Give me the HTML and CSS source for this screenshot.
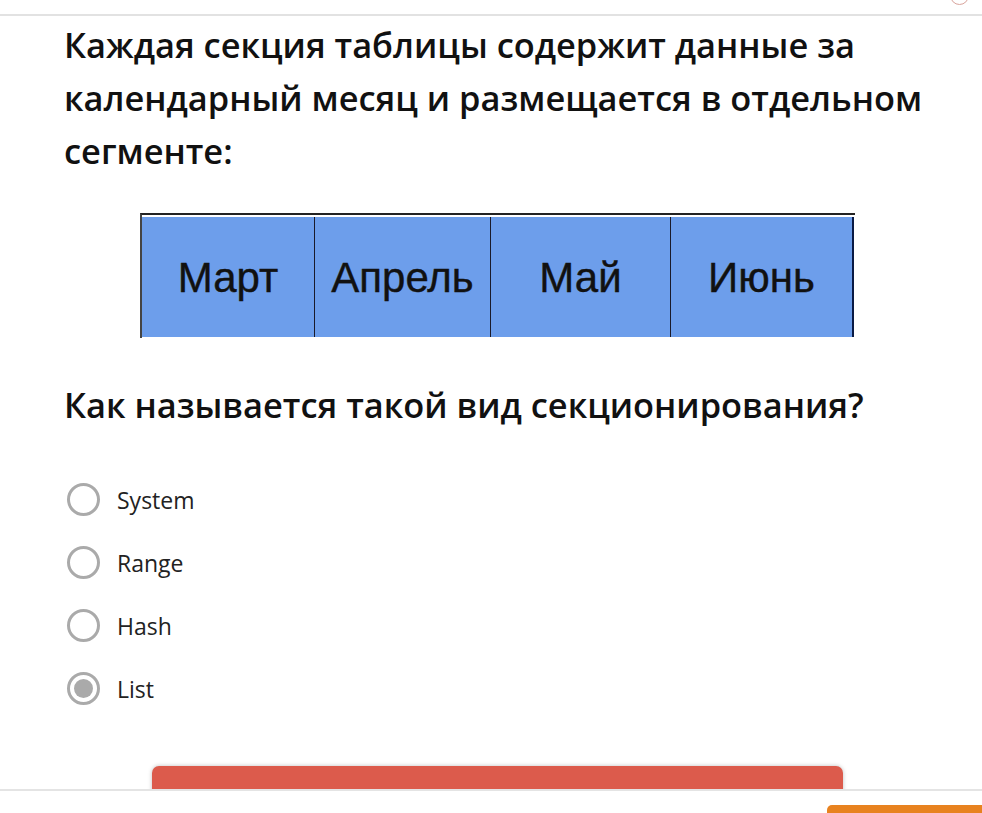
FILE: index.html
```html
<!DOCTYPE html>
<html lang="ru">
<head>
<meta charset="utf-8">
<title>Вопрос</title>
<link rel="stylesheet" href="styles.css">
</head>
<body>
<header class="topbar">
  <span class="topbar-icon"></span>
</header>
<main class="content">
  <h2 class="lead">Каждая секция таблицы содержит данные за календарный месяц и размещается в отдельном сегменте:</h2>
  <div class="figure">
    <div class="months">
      <div class="cell c1">Март</div>
      <div class="cell c2">Апрель</div>
      <div class="cell c3">Май</div>
      <div class="cell c4">Июнь</div>
    </div>
  </div>
  <h2 class="question">Как называется такой вид секционирования?</h2>
  <ul class="options">
    <li class="option"><span class="radio"></span><span class="label">System</span></li>
    <li class="option"><span class="radio"></span><span class="label">Range</span></li>
    <li class="option"><span class="radio"></span><span class="label">Hash</span></li>
    <li class="option"><span class="radio checked"></span><span class="label">List</span></li>
  </ul>
  <div class="submit-wrap"><div class="submit"></div></div>
</main>
<footer class="footer">
  <div class="next"></div>
</footer>
</body>
</html>
```
FILE: styles.css
```css
* { box-sizing: border-box; }
html, body { margin: 0; padding: 0; background: #fff; }
body {
  font-family: "Open Sans", "Noto Sans", sans-serif;
  color: #111;
  width: 982px;
  height: 813px;
  overflow: hidden;
}
.topbar {
  height: 16px;
  border-bottom: 2px solid #e2e2e2;
  position: relative;
}
.topbar-icon {
  position: absolute;
  right: 13px;
  top: -14px;
  width: 19px;
  height: 19px;
  border: 1.5px solid #d9a49c;
  border-radius: 50%;
}
.content {
  padding: 2px 0 0 64px;
}
.lead, .question {
  margin: 0;
  font-size: 34.4px;
  font-weight: 600;
  line-height: 53px;
  color: #111;
}
.lead { width: 900px; }
.figure {
  margin: 36px 0 0 76px;
  width: 715px;
  height: 125px;
}
.months {
  display: flex;
  height: 125px;
  border-top: 2px solid #222;
  border-left: 2px solid #444;
  padding-top: 2px;
  background: #fff;
}
.cell {
  background: #6d9eeb;
  height: 120px;
  display: flex;
  align-items: center;
  justify-content: center;
  font-family: "Liberation Sans", Arial, sans-serif;
  font-size: 42px;
  color: #111;
  border-right: 1.5px solid #1a1a2a;
  padding-top: 2px;
  -webkit-text-stroke: 0.4px #111;
}
.c1 { width: 173px; }
.c2 { width: 176px; }
.c3 { width: 180px; }
.c4 { width: 183px; border-right: 2px solid #0a1a44; }
.question { margin-top: 40px; }
.options {
  list-style: none;
  margin: 37px 0 0 3px;
  padding: 0;
}
.option {
  display: flex;
  align-items: center;
  height: 63px;
}
.radio {
  width: 33px;
  height: 33px;
  border: 3px solid #aaa;
  border-radius: 50%;
  display: flex;
  align-items: center;
  justify-content: center;
  flex: none;
}
.radio.checked::after {
  content: "";
  width: 19px;
  height: 19px;
  border-radius: 50%;
  background: #aaa;
}
.label {
  margin-left: 17px;
  font-size: 23px;
  color: #222;
}
.submit-wrap {
  margin: 46px 0 0 88px;
}
.submit {
  width: 691px;
  height: 40px;
  background: #dc5b4c;
  border-radius: 7px;
  box-shadow: 0 0 4px rgba(0,0,0,0.25);
}
.footer {
  position: fixed;
  left: 0;
  right: 0;
  top: 789px;
  height: 24px;
  background: #fff;
  border-top: 2px solid #e4e4e4;
}
.next {
  position: absolute;
  left: 827px;
  top: 14px;
  width: 160px;
  height: 20px;
  background: #e8821f;
  border-radius: 5px;
}
```
